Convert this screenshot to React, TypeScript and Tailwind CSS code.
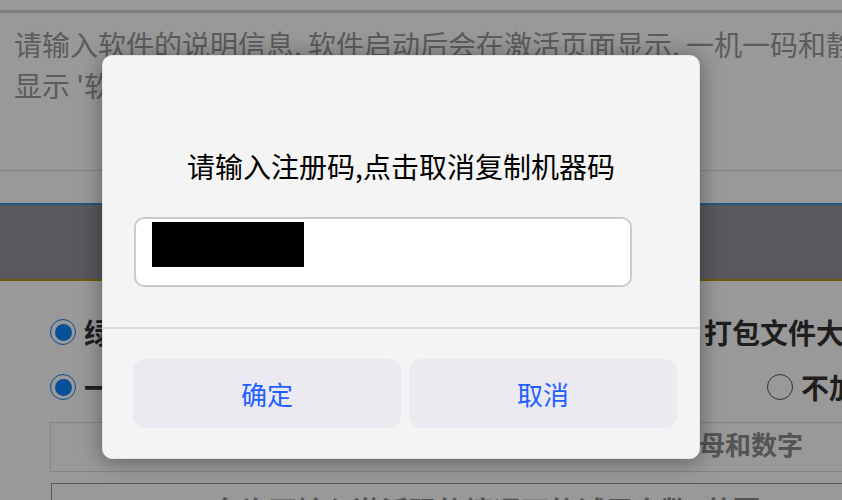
import React from 'react'

function Radio({ checked }: { checked?: boolean }) {
  if (checked) {
    return (
      <span className="flex size-[26px] shrink-0 items-center justify-center rounded-full border-[1.5px] border-[#1a7df0] bg-white">
        <span className="size-[17px] rounded-full bg-[#0a84ff]" />
      </span>
    )
  }
  return <span className="size-[26px] shrink-0 rounded-full border border-[#555] bg-white" />
}

function PromptDialog() {
  return (
    <div className="absolute left-[102px] top-[55px] w-[598px] rounded-[10px] border border-[#e4e4e4] bg-[#f4f4f4] shadow-[0_2px_22px_rgba(0,0,0,0.4)]">
      <div className="pt-[90px] text-center text-[28px] leading-[40px] text-black">
        请输入注册码,点击取消复制机器码
      </div>
      <div className="ml-[31px] mt-[31px] h-[70px] w-[498px] rounded-[10px] border-2 border-[#cacaca] bg-white pl-[16px] pt-[3px]">
        <div className="h-[45px] w-[152px] bg-black" />
      </div>
      <div className="mt-[40px] h-[2px] bg-[#dcdcdc]" />
      <div className="flex gap-2 pb-[30px] pl-[30px] pr-[22px] pt-[30px]">
        <button className="h-[69px] w-[268px] rounded-[12px] bg-[#eaeaf0] text-[26px] text-[#1f60ff]">
          确定
        </button>
        <button className="h-[69px] w-[268px] rounded-[12px] bg-[#eaeaf0] text-[26px] text-[#1f60ff]">
          取消
        </button>
      </div>
    </div>
  )
}

export default function App() {
  return (
    <div className="relative h-[500px] w-[842px] overflow-hidden whitespace-nowrap bg-white font-['Noto_Sans_CJK_SC','Noto_Sans',sans-serif]">
      <div className="h-[10px]" />
      <div className="h-[161px] border-t-[3px] border-b border-t-[#d4d4d4] border-b-[#dedede] pl-[14px] pt-[11px] text-[28px] leading-[41px] text-[#999]">
        <div>请输入软件的说明信息, 软件启动后会在激活页面显示, 一机一码和静默模式下不会</div>
        <div>显示 '软件说明' 内容</div>
      </div>

      <div className="mt-[32px] h-[78px] border-y-2 border-t-[#3a8ed4] border-b-[#b29619] bg-[#93939b]" />

      <div className="mt-[24px] flex h-[54px] items-center text-[28px] font-bold text-[#333]">
        <div className="flex w-[670px] shrink-0 items-center gap-2 pl-[50px]">
          <Radio checked />
          <span>绿色版打包</span>
        </div>
        <div className="flex shrink-0 items-center gap-2">
          <Radio />
          <span>打包文件大小</span>
        </div>
      </div>

      <div className="flex h-[56px] items-center text-[28px] font-bold text-[#333]">
        <div className="flex w-[767px] shrink-0 items-center gap-2 pl-[50px]">
          <Radio checked />
          <span>一机一码加密</span>
        </div>
        <div className="flex shrink-0 items-center gap-2">
          <Radio />
          <span>不加密</span>
        </div>
      </div>

      <div className="ml-[50px] mt-[7px] flex h-[50px] w-[800px] items-start justify-end border border-[#dedede] pr-[46px] pt-[2px] text-[26px] font-bold leading-[38px] text-[#8c8c8c]">
        激活码只能是字母和数字
      </div>

      <div className="ml-[51px] mt-[11px] h-[50px] w-[800px] border border-[#969696] pl-[161px] pt-[6px] text-[28px] font-bold leading-[40px] text-[#8c8c8c]">
        允许不输入激活码的情况下的试用次数, 范围0-1000
      </div>

      <div className="absolute inset-0 bg-black/40" />
      <PromptDialog />
    </div>
  )
}
